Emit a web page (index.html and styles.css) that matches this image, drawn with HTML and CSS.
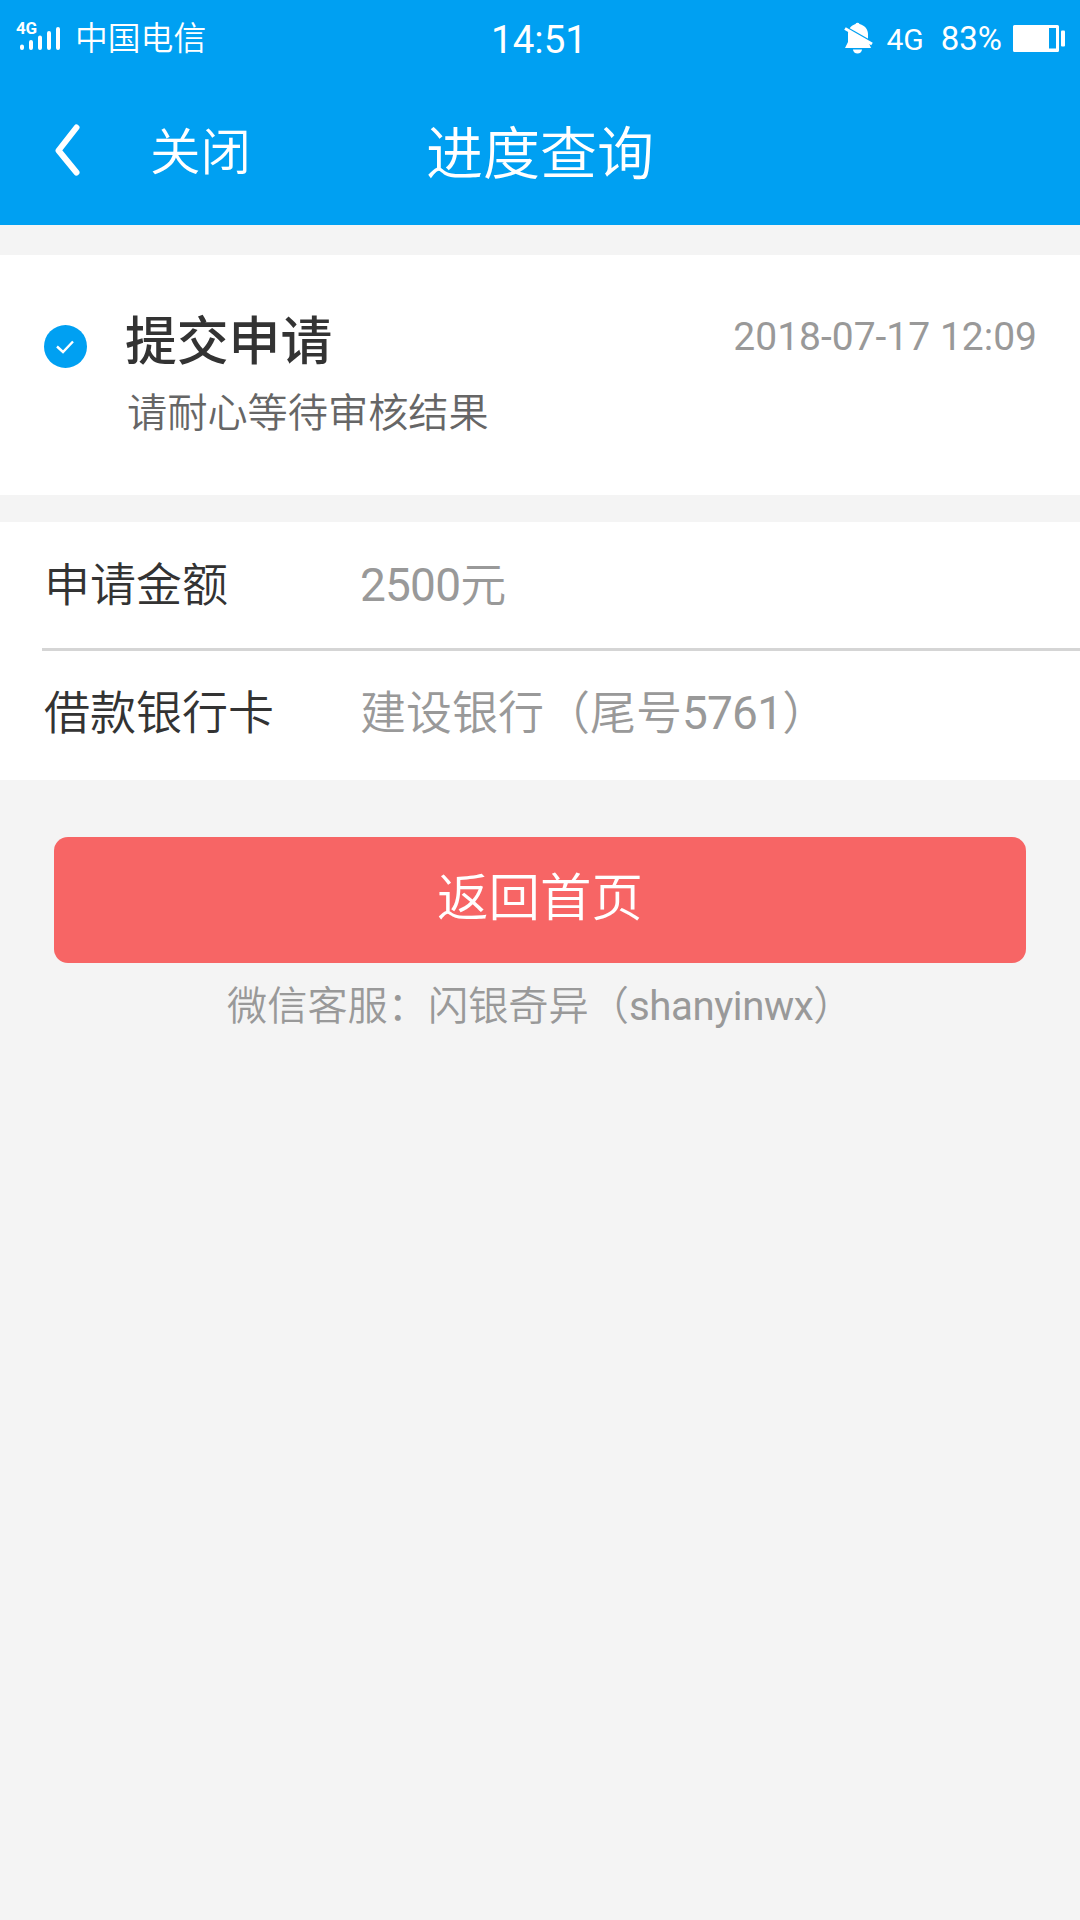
FILE: index.html
```html
<!DOCTYPE html>
<html lang="zh-CN">
<head>
    <meta charset="UTF-8">
    <meta name="viewport" content="width=device-width, initial-scale=1.0">
    <title>进度查询</title>
    <link rel="stylesheet" href="styles.css">
</head>
<body>
    <header class="header">
        <div class="status-bar">
            <div class="status-left">
                <svg class="signal" width="50" height="46" viewBox="-3 -6 50 46">
                    <text class="signal-text" x="0" y="13" textLength="21">4G</text>
                    <g stroke="#fff" stroke-width="4" stroke-linecap="round">
                        <path d="M6 25.500v1.500M15 21v6M24 16.500v10.500M33 12v15M42 8v19"/>
                    </g>
                </svg>
                <span class="carrier">中国电信</span>
            </div>
            <div class="clock">14:51</div>
            <div class="status-right">
                <svg class="bell" width="30" height="34" viewBox="0 0 30 34">
                    <path fill="#fff" d="M11.500 3a2.200 2.200 0 0 1 4 0c6 1.500 8.500 6 8.500 10v7l3 7H1l3-6v-8c0-5 3-8.500 7.500-10z"/>
                    <path fill="#fff" d="M9 28.500h9a4.500 4 0 0 1-9 0z"/>
                    <path stroke="#00a0f2" stroke-width="2" d="M0 5l29 16.500"/>
                    <path stroke="#fff" stroke-width="3" d="M1 7.500l27 15.500"/>
                </svg>
                <span class="network">4G</span>
                <span class="percent">83%</span>
                <svg class="battery" width="52" height="27" viewBox="0 0 52 27">
                    <path fill="#fff" fill-rule="evenodd" d="M1.500 0h43a1.500 1.500 0 0 1 1.500 1.500v24a1.500 1.500 0 0 1-1.500 1.500h-43a1.500 1.500 0 0 1-1.500-1.500v-24a1.500 1.500 0 0 1 1.500-1.500zM36 3v20.500h7V3z"/>
                    <rect x="48" y="5.500" width="4" height="16" rx="1" fill="#fff"/>
                </svg>
            </div>
        </div>
        <nav class="nav">
            <svg class="back" width="26" height="54" viewBox="0 0 26 54">
                <path d="M21.500 4.500L3.500 27.500L21.500 49.500" fill="none" stroke="#fff" stroke-width="6" stroke-linecap="round" stroke-linejoin="round"/>
            </svg>
            <span class="close">关闭</span>
            <h1 class="title">进度查询</h1>
        </nav>
    </header>

    <main>
        <section class="progress">
            <svg class="check" width="43" height="43" viewBox="0 0 43 43">
                <circle cx="21.500" cy="21.500" r="21.500" fill="#00a0f2"/>
                <path d="M13 21.500l6 5.500 10-10.500" fill="none" stroke="#fff" stroke-width="2.400"/>
            </svg>
            <div class="step">
                <h2 class="step-title">提交申请</h2>
                <p class="step-desc">请耐心等待审核结果</p>
            </div>
            <time class="step-time">2018-07-17 12:09</time>
        </section>

        <section class="info">
            <div class="row">
                <span class="label">申请金额</span>
                <span class="value"><span class="num">2500</span>元</span>
            </div>
            <div class="row">
                <span class="label">借款银行卡</span>
                <span class="value">建设银行（尾号<span class="num">5761</span>）</span>
            </div>
        </section>

        <button class="btn">返回首页</button>
        <p class="service">微信客服：闪银奇异（<span class="wx">shanyinwx</span>）</p>
    </main>
</body>
</html>
```
FILE: styles.css
```css
*{
    margin: 0;
    padding: 0;
    box-sizing: border-box;
}

body{
    background-color: #f4f4f4;
    font-family: Roboto, "Noto Sans CJK SC DemiLight", "Noto Sans CJK SC", sans-serif;
}

.header{
    height: 225px;
    background-color: #00a0f2;
    color: #fff;
}

.status-bar{
    display: grid;
    grid-template-columns: 1fr auto 1fr;
    height: 76px;
    padding: 0 15px 0 13px;
    align-items: center;
}

.status-left, .status-right{
    display: flex;
    align-items: center;
}

.status-right{
    justify-content: flex-end;
}

.signal{
    margin-top: -1px;
}

.signal-text{
    font-size: 17px;
    font-weight: 700;
    fill: #fff;
}

.carrier{
    margin-left: 12px;
    padding-top: 2px;
    font-size: 32.8px;
    line-height: 48px;
}

.clock{
    padding-top: 3px;
    font-size: 38.5px;
}

.network{
    margin-left: 12px;
    padding-top: 2px;
    font-size: 30px;
}

.percent{
    margin: 0 11px 0 17px;
    padding-top: 1px;
    font-size: 33px;
}

.nav{
    display: flex;
    align-items: center;
    height: 147px;
    padding: 0 54px 0 55px;
}

.close{
    width: 276px;
    margin-left: 69px;
    padding-bottom: 3px;
    font-size: 50.5px;
}

.title{
    padding-bottom: 2px;
    font-size: 57px;
    font-weight: 400;
}

.progress{
    display: flex;
    align-items: flex-start;
    height: 240px;
    margin-top: 30px;
    padding: 55px 43px 0 44px;
    background-color: #fff;
}

.check{
    margin-top: 15px;
}

.step{
    flex: 1;
    margin-left: 38px;
}

.step-title{
    margin-top: -2px;
    font-family: "Noto Sans CJK SC", sans-serif;
    font-size: 51.8px;
    font-weight: 500;
    line-height: 60px;
    color: #333;
}

.step-desc{
    margin: 17px 0 0 2px;
    font-size: 40.2px;
    line-height: 58px;
    color: #666;
}

.step-time{
    font-size: 39px;
    line-height: 55px;
    color: #999;
}

.info{
    margin-top: 27px;
    padding-left: 42px;
    background-color: #fff;
}

.row{
    display: flex;
    align-items: center;
    height: 129px;
    padding: 0 0 13px 2px;
    font-size: 46px;
}

.row:first-child{
    padding-bottom: 9px;
    border-bottom: 3px solid #d5d5d5;
}

.label{
    width: 316px;
    color: #333;
}

.value{
    color: #999;
}

.num{
    letter-spacing: -0.8px;
}

.btn{
    display: block;
    width: 972px;
    height: 126px;
    margin: 57px auto 0;
    padding-bottom: 14px;
    border: none;
    border-radius: 14px;
    background-color: #f76565;
    color: #fff;
    font-family: inherit;
    font-size: 51.5px;
}

.service{
    margin-top: 15px;
    padding-left: 227px;
    font-size: 40.2px;
    line-height: 58px;
    color: #999;
}

.wx{
    letter-spacing: -0.4px;
}
```
